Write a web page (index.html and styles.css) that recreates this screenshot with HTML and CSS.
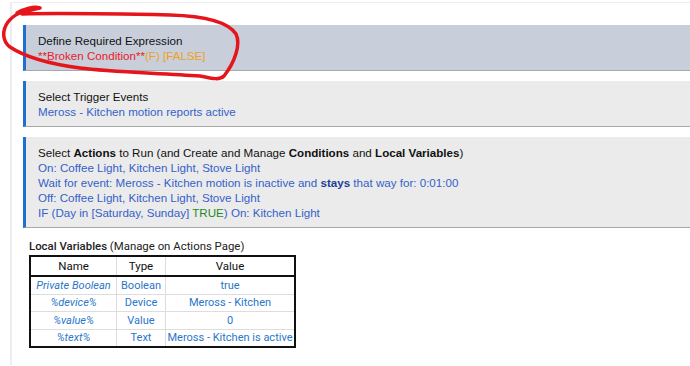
FILE: index.html
```html
<!DOCTYPE html>
<html lang="en">
<head>
    <meta charset="UTF-8">
    <title>Rule Machine</title>
    <link rel="stylesheet" href="styles.css">
</head>
<body>
    <div class="page">
        <!-- Required expression -->
        <div class="section section-alert">
            <div class="section-title">Define Required Expression</div>
            <div><span class="red">**Broken Condition**</span><span class="orange">(F) [FALSE]</span></div>
        </div>

        <!-- Triggers -->
        <div class="section">
            <div class="section-title">Select Trigger Events</div>
            <div class="blue">Meross - Kitchen motion reports active</div>
        </div>

        <!-- Actions -->
        <div class="section">
            <div class="section-title">Select <b>Actions</b> to Run (and Create and Manage <b>Conditions</b> and <b>Local Variables</b>)</div>
            <div class="blue">On: Coffee Light, Kitchen Light, Stove Light</div>
            <div class="blue">Wait for event: Meross - Kitchen motion is inactive and <b>stays</b> that way for: 0:01:00</div>
            <div class="blue">Off: Coffee Light, Kitchen Light, Stove Light</div>
            <div class="blue">IF (Day in [Saturday, Sunday] <span class="green">TRUE</span>) On: Kitchen Light</div>
        </div>

        <!-- Local variables -->
        <div class="vars">
            <div class="vars-title"><span class="vars-strong">Local Variables</span> (Manage on Actions Page)</div>
            <table class="vars-table">
                <thead>
                    <tr><th class="col-name">Name</th><th class="col-type">Type</th><th>Value</th></tr>
                </thead>
                <tbody>
                    <tr><td class="var-name">Private Boolean</td><td>Boolean</td><td>true</td></tr>
                    <tr><td class="var-name">%device%</td><td>Device</td><td>Meross - Kitchen</td></tr>
                    <tr><td class="var-name">%value%</td><td>Value</td><td>0</td></tr>
                    <tr><td class="var-name">%text%</td><td>Text</td><td>Meross - Kitchen is active</td></tr>
                </tbody>
            </table>
        </div>
    </div>

    <!-- Hand drawn circle over the first section -->
    <svg class="scribble" width="250" height="90" viewBox="0 0 250 90">
        <path d="M17 13 C 24 9, 34 6, 40 8 C 34 9, 26 11, 22 14 C 60 13, 120 14, 170 15 C 205 16, 228 22, 236 34 C 241 44, 235 62, 224 76 C 220 80, 214 79, 200 76 C 160 73, 110 72, 80 68 C 50 64, 25 57, 10 47 C 2 41, 2 30, 8 22 C 11 18, 15 15, 20 13"
              fill="none" stroke="#e5151b" stroke-width="3.5" stroke-linecap="round" stroke-linejoin="round"/>
    </svg>
</body>
</html>
```

FILE: styles.css
```css
/* Page frame */
body {
    margin: 0;
    background-color: #fff;
    font-family: "Liberation Sans", Arial, sans-serif;
    font-size: 11.6px;
    color: #111;
}
.page {
    margin: 2px 0 0 10px;
    padding: 22px 0 0 11px;
    border-top: 1px solid #ececf2;
    border-left: 2px solid #ececf2;
    min-height: 340px;
}

/* Sections */
.section {
    background-color: #ebebeb;
    border-left: 3px solid #1f6fd1;
    border-bottom: 1px solid #a8a8a8;
    padding: 8px 12px 7px;
    line-height: 15px;
    margin-bottom: 10px;
}
.section-alert {
    background-color: #c8cfdb;
}
.blue {
    color: #3561c9;
}
.blue b {
    color: #1d3f9a;
}
.red {
    color: #e8202a;
}
.orange {
    color: #f0a020;
}
.green {
    color: #1e8a1e;
}

/* Local variables */
.vars {
    padding: 0 0 0 6px;
    font-family: Roboto, "Liberation Sans", sans-serif;
}
.vars-title {
    font-size: 11.4px;
    line-height: 16px;
    color: #222;
    margin-bottom: 1px;
}
.vars-strong {
    font-weight: 500;
}
.vars-table {
    border-collapse: collapse;
    border: 2px solid #111;
    width: 267px;
    table-layout: fixed;
    font-size: 11px;
    white-space: nowrap;
}
.vars-table th {
    font-weight: normal;
    font-size: 11.5px;
    color: #111;
    height: 18px;
    padding: 0;
    border-left: 1px solid #ddd;
    border-bottom: 2px solid #111;
}
.vars-table td {
    color: #2a76c9;
    text-align: center;
    height: 16.5px;
    padding: 0;
    border-left: 1px solid #ddd;
    border-bottom: 1px solid #ddd;
}
.col-name {
    width: 85px;
}
.col-type {
    width: 48px;
}
.var-name {
    font-style: italic;
}

/* Red marker circle */
.scribble {
    position: absolute;
    top: 0;
    left: 0;
}
```
